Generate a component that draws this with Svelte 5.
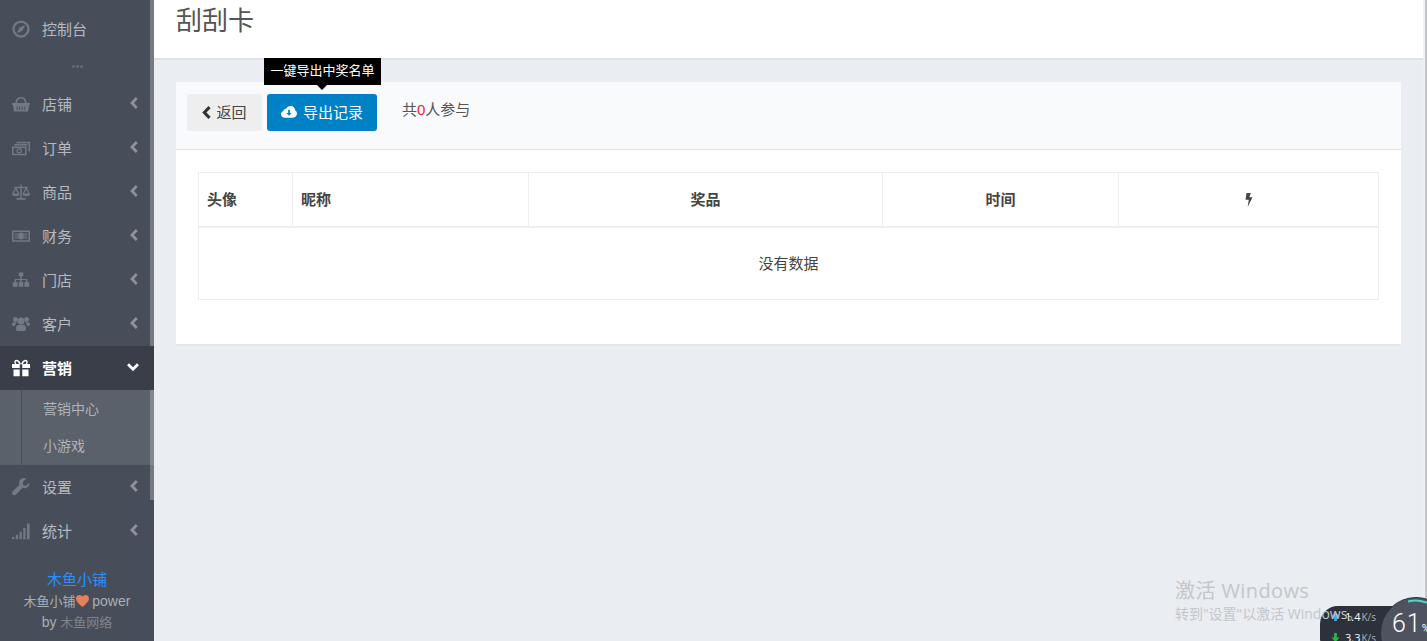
<script>
  const icons = {
    compass: '<circle cx="12" cy="12" r="10" fill="none" stroke="currentColor" stroke-width="3"/><path d="M17.500 6.500l-3.500 7.500-7.500 3.500 3.500-7.500z"/>',
    basket: '<path d="M4.500 11C4.500 5 8 2.500 12 2.500s7.500 2.500 7.500 8.500h-2.200c0-4-2.300-6.300-5.300-6.300S6.700 7 6.700 11z"/><path d="M0 10.500h24V13h-1.200l-1.500 9H2.700L1.200 13H0z"/><path d="M7 15v5M10.300 15v5M13.700 15v5M17 15v5" stroke="#474e59" stroke-width="1.200"/>',
    money: '<path d="M6 3.500h18v13h-2V5.500H6z"/><path d="M3 6.500h17.500v2.200H3z"/><path fill-rule="evenodd" d="M0 10h19.500v11.500H0zM2 12v7.500h15.500V12z"/><circle cx="9.700" cy="15.700" r="2.800" fill="none" stroke="currentColor" stroke-width="1.600"/>',
    scale: '<path d="M11 2h2v18h5v2.200H6V20h5z"/><path d="M3 5h18v1.800H3z"/><path fill-rule="evenodd" d="M5 5l5 9.500c0 2-2.200 3-5 3s-5-1-5-3zM5 8.500L2 14h6z"/><path fill-rule="evenodd" d="M19 5l5 9.500c0 2-2.200 3-5 3s-5-1-5-3zM19 8.500L16 14h6z"/>',
    cash: '<path fill-rule="evenodd" d="M0 4.500h24v15H0zM2 6.500v11h20v-11z"/><path d="M3.500 8h17v8h-17z" opacity=".5"/><ellipse cx="12" cy="12" rx="3.400" ry="4.800"/>',
    sitemap: '<path d="M9 2h6v5h-2v3.500h7.500V15H23v6h-6.500v-6h2v-3H13v3h2v6H9v-6h2v-3H5.500v3h2v6H1v-6h2.500v-4.500H11V7H9z"/>',
    group: '<circle cx="12" cy="8" r="4.800"/><circle cx="4.500" cy="6" r="3.200"/><circle cx="19.500" cy="6" r="3.200"/><path d="M5.500 20.500v-4C5.500 13.500 8 12.500 12 12.500s6.500 1 6.500 4v4c-2 1.200-11 1.200-13 0z"/><path d="M0 11.500C0 10 2 9.500 4.500 9.500c.8 0 1.500.1 2 .3-1.500 1-2.500 3-2.600 5C1.500 14.800 0 13.800 0 12.500zM24 11.500C24 10 22 9.500 19.500 9.500c-.8 0-1.500.1-2 .3 1.500 1 2.500 3 2.600 5 2.400 0 3.900-1 3.900-2.300z"/>',
    gift: '<path fill-rule="evenodd" d="M12 6.500C10 2 7.500 1 6 1 4 1 3 2.500 3 4c0 1 .4 1.800 1 2.500H0V12h10.300V7h3.400v5H24V6.500h-4c.6-.7 1-1.500 1-2.500 0-1.500-1-3-3-3-1.500 0-4 1-6 5.500zM6 3c1.200 0 2.500 1.300 3.500 3.500H6C5.200 6.500 5 5 5 4.500 5 3.700 5.300 3 6 3zm12 0c.7 0 1 .7 1 1.500 0 .5-.2 2-1 2h-3.500C15.500 4.300 16.800 3 18 3z"/><path d="M2 14h8.300v9H2zM13.700 14H22v9h-8.300z"/>',
    wrench: '<path d="M23.500 6.500c0 4-3.200 7-7 7-.9 0-1.700-.2-2.500-.4L5.500 22c-1.300 1.300-3.300 1.300-4.500 0-1.300-1.300-1.300-3.300 0-4.500l9-8.500c-.3-.8-.5-1.600-.5-2.500 0-3.800 3-6.500 7-6.500.9 0 1.700.2 2.400.5L14.500 5v4l3.500 1.800 5-4.300z"/>',
    signal: '<path d="M0 20h3v3H0zM5 17h3v6H5zM10 13h3v10h-3zM15 8h3v15h-3zM20 2h3.500v21H20z"/>'
  };

  const groupA = [
    { name: '店铺', icon: 'basket' },
    { name: '订单', icon: 'money' },
    { name: '商品', icon: 'scale' },
    { name: '财务', icon: 'cash' },
    { name: '门店', icon: 'sitemap' },
    { name: '客户', icon: 'group' }
  ];
  const groupB = [
    { name: '设置', icon: 'wrench' },
    { name: '统计', icon: 'signal' }
  ];
  const subMenu = ['营销中心', '小游戏'];
  const columns = ['头像', '昵称', '奖品', '时间'];
</script>

{#snippet menuItem(item)}
  <a class="menu-item" href="#top">
    <svg class="menu-icon" viewBox="0 0 24 24" fill="currentColor">{@html icons[item.icon]}</svg>
    <span class="menu-name">{item.name}</span>
    <svg class="chevron" viewBox="0 0 8 12" fill="none" stroke="currentColor" stroke-width="2.800"><path d="M6.800 1L2 6l4.800 5"/></svg>
  </a>
{/snippet}

<div class="layout">
  <aside class="sidebar">
    <a class="menu-item" href="#top">
      <svg class="menu-icon" viewBox="0 0 24 24" fill="currentColor">{@html icons.compass}</svg>
      <span class="menu-name">控制台</span>
    </a>
    <div class="dots"><i></i><i></i><i></i></div>

    {#each groupA as item}
      {@render menuItem(item)}
    {/each}

    <a class="menu-item active" href="#top">
      <svg class="menu-icon" viewBox="0 0 24 24" fill="currentColor">{@html icons.gift}</svg>
      <span class="menu-name">营销</span>
      <svg class="chevron-down" viewBox="0 0 12 8" fill="none" stroke="currentColor" stroke-width="2.800"><path d="M1 1.200L6 6.200l5-5"/></svg>
    </a>
    <ul class="sub-menu">
      {#each subMenu as sub}
        <li>{sub}</li>
      {/each}
    </ul>

    {#each groupB as item}
      {@render menuItem(item)}
    {/each}

    <footer class="side-footer">
      <div class="brand">木鱼小铺</div>
      <div>木鱼小铺<svg class="heart" viewBox="0 0 24 22"><path fill="#e5825a" d="M12 22C5 16 0 12 0 6.500 0 3 2.700 0 6.300 0 8.700 0 10.800 1.300 12 3.300 13.200 1.300 15.300 0 17.700 0 21.300 0 24 3 24 6.500 24 12 19 16 12 22z"/></svg> <span class="latin">power</span></div>
      <div><span class="latin">by</span> <span class="company">木鱼网络</span></div>
    </footer>
    <div class="side-scroll"></div>
  </aside>

  <main class="content">
    <header class="page-head">
      <h1>刮刮卡</h1>
    </header>

    <section class="panel">
      <div class="panel-head">
        <button class="btn btn-back">
          <svg class="btn-chevron" viewBox="0 0 8 12" fill="none" stroke="currentColor" stroke-width="2.800"><path d="M6.800 1L2 6l4.800 5"/></svg>
          返回
        </button>
        <button class="btn btn-export">
          <span class="tip">一键导出中奖名单</span>
          <svg class="cloud" viewBox="0 0 24 18">
            <path fill="#fff" d="M5.500 17.500C2.500 17.500 0 15.200 0 12.300c0-2.300 1.500-4.200 3.600-4.900C3.800 5.300 5.600 3.800 7.700 4 9 1.600 11.500 0 14.300 0c3.900 0 7 3 7.100 6.800 1.600.9 2.600 2.700 2.600 4.600 0 3.400-2.800 6.100-6.200 6.100z"/>
            <path fill="#0081c6" d="M10.700 5.500h2.600v5H16l-4 4.300-4-4.300h2.700z"/>
          </svg>
          导出记录
        </button>
        <span class="count">共<em>0</em>人参与</span>
      </div>

      <div class="panel-body">
        <table>
          <colgroup>
            <col style="width: 94px" />
            <col style="width: 236px" />
            <col style="width: 354px" />
            <col style="width: 236px" />
            <col />
          </colgroup>
          <thead>
            <tr>
              {#each columns as col, i}
                <th class:center={i > 1}>{col}</th>
              {/each}
              <th class="center">
                <svg class="bolt" viewBox="0 0 8 14" fill="currentColor"><path d="M1.500 0h4.300L4.300 4.300H7.500L2.700 14 3.800 6.800H.5z"/></svg>
              </th>
            </tr>
          </thead>
          <tbody>
            <tr><td colspan="5">没有数据</td></tr>
          </tbody>
        </table>
      </div>
    </section>
  </main>

  <div class="page-scroll"></div>

  <div class="net-widget">
    <div class="speed up">
      <svg class="arrow" viewBox="0 0 10 10" fill="currentColor"><path d="M5 0l4.500 5H6.500v5h-3V5H.5z"/></svg>
      <span>1.4</span><small>K/s</small>
    </div>
    <div class="speed down">
      <svg class="arrow" viewBox="0 0 10 10" fill="currentColor"><path d="M5 10L.5 5h3V0h3v5h3z"/></svg>
      <span>3.3</span><small>K/s</small>
    </div>
    <div class="gauge">
      <svg class="gauge-arc" viewBox="0 0 72 72" fill="none"><path d="M28 4.500A32 32 0 0 1 60 15" stroke="#4fd6c4" stroke-width="2"/></svg>
      <span class="gauge-num">61</span><span class="gauge-pct">%</span>
    </div>
  </div>

  <div class="watermark">
    <div class="wm-title">激活 Windows</div>
    <div class="wm-text">转到"设置"以激活 Windows。</div>
  </div>
</div>

<style>
  :global(body) {
    margin: 0;
    overflow: hidden;
    background: #eaedf2;
  }

  .layout {
    position: relative;
    display: flex;
    height: 641px;
    overflow: hidden;
    background: #eaedf2;
    color: #555;
    font-family: "Liberation Sans", "Noto Sans CJK SC", sans-serif;
    font-size: 15px;
  }

  /* sidebar */
  .sidebar {
    position: relative;
    box-sizing: border-box;
    flex: 0 0 154px;
    padding-top: 7px;
    background: #474e59;
    color: #b6bac0;
  }

  .menu-item {
    display: flex;
    align-items: center;
    height: 44px;
    color: inherit;
    text-decoration: none;
  }

  .menu-icon {
    flex: none;
    width: 18px;
    height: 18px;
    margin-left: 12px;
    color: #737a84;
  }

  .menu-name {
    margin-left: 12px;
    margin-bottom: 2px;
    flex: 1;
  }

  .chevron {
    flex: none;
    width: 8px;
    height: 12px;
    margin-right: 16px;
    margin-top: -2px;
    color: #8d929a;
  }

  .chevron-down {
    flex: none;
    width: 12px;
    height: 8px;
    margin-right: 15px;
    margin-top: -2px;
    color: #fff;
  }

  .active {
    position: relative;
    z-index: 1;
    background: #393e49;
    color: #fff;
    font-weight: 700;
  }

  .active .menu-icon {
    color: #fff;
  }

  .dots {
    display: flex;
    justify-content: center;
    align-items: center;
    gap: 1px;
    height: 31px;
  }

  .dots i {
    width: 3px;
    height: 3px;
    border-radius: 50%;
    background: #636a75;
  }

  .sub-menu {
    box-sizing: border-box;
    height: 75px;
    margin: 0;
    padding: 0 0 0 21px;
    list-style: none;
    background: #5a616b;
    color: #aeb2b8;
    font-size: 14px;
  }

  .sub-menu li {
    height: 37.500px;
    line-height: 37px;
    padding-left: 21px;
    border-left: 1px solid #474e59;
  }

  .sub-menu li:first-child {
    line-height: 39px;
  }

  .side-footer {
    padding-top: 16px;
    text-align: center;
    font-size: 13px;
    line-height: 21px;
    color: #a9aeb5;
  }

  .brand {
    color: #2a8fff;
    font-size: 15px;
    line-height: 22px;
  }

  .latin {
    font-size: 14px;
  }

  .heart {
    width: 13px;
    height: 12px;
    vertical-align: -1px;
  }

  .company {
    color: #7f848b;
  }

  .side-scroll {
    position: absolute;
    top: 0;
    right: 0;
    width: 4px;
    height: 500px;
    background: rgba(255, 255, 255, 0.25);
  }

  /* main */
  .content {
    flex: 1;
    min-width: 0;
    padding-right: 4px;
  }

  .page-head {
    box-sizing: border-box;
    height: 60px;
    background: #fff;
    border-bottom: 2px solid #dde1e8;
  }

  .page-head h1 {
    margin: 0;
    padding: 2px 0 0 22px;
    font-size: 26px;
    font-weight: 400;
    line-height: 38px;
    color: #555;
  }

  .panel {
    margin: 22px 22px 0;
    background: #fff;
    border-radius: 2px;
    border-bottom: 2px solid #e3e6ec;
  }

  .panel-head {
    box-sizing: border-box;
    display: flex;
    align-items: flex-start;
    height: 68px;
    padding: 12px 11px 0;
    background: #f9fafc;
    border-bottom: 1px solid #dde1e8;
  }

  .btn {
    position: relative;
    display: flex;
    align-items: center;
    justify-content: center;
    height: 37px;
    padding: 0 0 3px;
    border: 0;
    border-radius: 3px;
    font: inherit;
  }

  .btn-back {
    width: 75px;
    background: #eee;
    color: #444;
    gap: 5px;
  }

  .btn-chevron {
    flex: none;
    width: 9px;
    height: 13px;
    margin-top: 2px;
    color: #333;
  }

  .btn-export {
    width: 110px;
    margin-left: 5px;
    background: #0081c6;
    color: #fff;
    gap: 6px;
  }

  .cloud {
    flex: none;
    width: 16px;
    height: 12px;
    margin-top: 2px;
  }

  .tip {
    position: absolute;
    left: -3px;
    top: -36px;
    width: 117px;
    height: 27px;
    background: #000;
    color: #fff;
    font-size: 13px;
    line-height: 25px;
    text-align: center;
  }

  .tip::after {
    content: '';
    position: absolute;
    left: 53px;
    top: 27px;
    border: 5px solid transparent;
    border-top-color: #000;
    border-bottom: 0;
  }

  .count {
    margin-left: 25px;
    line-height: 32px;
    color: #555;
  }

  .count em {
    font-style: normal;
    color: #f5222d;
  }

  .panel-body {
    padding: 22px 22px 44px;
  }

  table {
    width: 100%;
    table-layout: fixed;
    border-collapse: collapse;
    color: #444;
  }

  th,
  td {
    border: 1px solid #ebeef3;
  }

  th {
    box-sizing: border-box;
    height: 54px;
    padding: 0 8px 2px;
    text-align: left;
    font-weight: 700;
    border-bottom-width: 2px;
  }

  .center {
    text-align: center;
  }

  td {
    height: 68px;
    padding-bottom: 2px;
    text-align: center;
  }

  .bolt {
    width: 8px;
    height: 14px;
    vertical-align: -3px;
    color: #444;
  }

  .page-scroll {
    position: absolute;
    top: 0;
    right: 0;
    width: 2px;
    height: 641px;
    background: #c4c6c9;
    border-left: 2px solid #eef0f3;
  }

  /* overlays */
  .net-widget {
    position: absolute;
    left: 1320px;
    top: 606px;
    width: 107px;
    height: 50px;
    border-radius: 18px 0 0 18px;
    background: #2c313b;
    color: #fff;
    font-family: "Open Sans", sans-serif;
    font-size: 11px;
  }

  .speed {
    display: flex;
    align-items: center;
    height: 21px;
    padding-left: 11px;
  }

  .arrow {
    flex: none;
    width: 9px;
    height: 9px;
    margin-right: 5px;
  }

  .up .arrow {
    color: #3fa9f5;
  }

  .down .arrow {
    color: #2fb344;
  }

  .speed small {
    margin-left: 1px;
    font-size: 10px;
    color: #aab0ba;
  }

  .gauge {
    position: absolute;
    left: 60px;
    top: -9px;
    box-sizing: border-box;
    width: 72px;
    height: 72px;
    padding: 11px 0 0 11px;
    border-radius: 50%;
    background: #4f535f;
    border: 1px solid #2c313b;
    color: #fff;
    white-space: nowrap;
    font-family: Roboto, sans-serif;
  }

  .gauge-arc {
    position: absolute;
    left: -1px;
    top: -1px;
    width: 72px;
    height: 72px;
  }

  .gauge-num {
    font-size: 25px;
    line-height: 30px;
    font-weight: 300;
    letter-spacing: 1px;
  }

  .gauge-pct {
    font-size: 11px;
  }

  .watermark {
    position: absolute;
    left: 1175px;
    top: 577px;
    color: #c4c6ca;
    white-space: nowrap;
    font-family: "Open Sans", "Noto Sans CJK SC", sans-serif;
  }

  .wm-title {
    font-size: 20px;
    line-height: 27px;
    letter-spacing: 0.4px;
  }

  .wm-text {
    font-size: 14px;
    line-height: 20px;
  }
</style>
